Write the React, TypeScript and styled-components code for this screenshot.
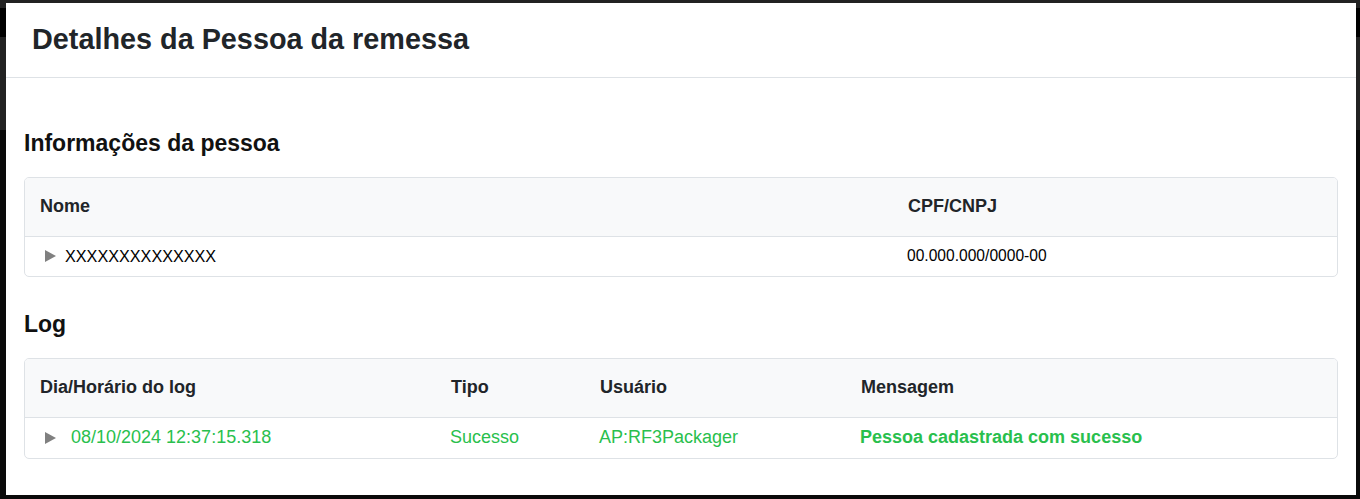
import React from "react";
import styled, { createGlobalStyle } from "styled-components";

const GlobalStyle = createGlobalStyle`
  html, body { margin: 0; padding: 0; }
  body {
    min-height: 499px;
    background: linear-gradient(
      to bottom,
      #222 0px, #222 8px,
      #000 8px, #000 37px,
      #222 37px, #222 130px,
      #0a0a0a 130px, #0a0a0a 100%
    );
    font-family: "Liberation Sans", Arial, Helvetica, sans-serif;
    overflow: hidden;
  }
  * { box-sizing: border-box; }
`;

const Modal = styled.div`
  margin: 3px 4px 0 6px;
  width: 1350px;
  background: #fff;
`;

const ModalHeader = styled.header`
  padding: 20px 26px 20px 26px;
  border-bottom: 1px solid #dee2e6;
`;

const Title = styled.h1`
  margin: 0;
  font-size: 28.8px;
  line-height: 33.6px;
  font-weight: 700;
  color: #212529;
`;

const ModalBody = styled.div`
  padding: 18px 18px 36px;
`;

const Section = styled.section`
  margin-top: 36px;
`;

const SectionTitle = styled.h2`
  margin: 0 0 22px;
  font-size: 23px;
  line-height: 23px;
  font-weight: 700;
  color: #111;
`;

const Table = styled.div<{ $cols: string }>`
  display: grid;
  grid-template-columns: ${(p) => p.$cols};
  border: 1px solid #dee2e6;
  border-radius: 5px;
  overflow: hidden;
`;

const HeadCell = styled.div`
  height: 59px;
  display: flex;
  align-items: center;
  padding: 0 14px 0 15px;
  background: #f8f9fa;
  border-bottom: 1px solid #dee2e6;
  font-size: 18px;
  font-weight: 700;
  color: #212529;
`;

const Cell = styled.div<{
  $h: number;
  $size: number;
  $tone?: "plain" | "success";
  $bold?: boolean;
  $gap?: number;
}>`
  height: ${(p) => p.$h}px;
  display: flex;
  align-items: center;
  gap: ${(p) => p.$gap ?? 0}px;
  padding: 0 14px;
  font-size: ${(p) => p.$size}px;
  font-weight: ${(p) => (p.$bold ? 700 : 400)};
  color: ${(p) => (p.$tone === "success" ? "#29bf4d" : "#000")};
  white-space: nowrap;
`;

const Toggle = styled.svg`
  flex: none;
  margin-left: 6px;
  width: 11px;
  height: 12px;
  fill: #808080;
`;

const Caret = () => (
  <Toggle viewBox="0 0 11 12" aria-hidden="true">
    <polygon points="0,0 11,6 0,12" />
  </Toggle>
);

export default function App() {
  return (
    <>
      <GlobalStyle />
      <Modal>
        <ModalHeader>
          <Title>Detalhes da Pessoa da remessa</Title>
        </ModalHeader>
        <ModalBody>
          <Section>
            <SectionTitle>Informações da pessoa</SectionTitle>
            <Table $cols="868px 1fr">
              <HeadCell>Nome</HeadCell>
              <HeadCell>CPF/CNPJ</HeadCell>
              <Cell $h={39} $size={16.2} $gap={9}>
                <Caret />
                XXXXXXXXXXXXXX
              </Cell>
              <Cell $h={39} $size={15.6}>00.000.000/0000-00</Cell>
            </Table>
          </Section>
          <Section>
            <SectionTitle>Log</SectionTitle>
            <Table $cols="411px 149px 261px 1fr">
              <HeadCell>Dia/Horário do log</HeadCell>
              <HeadCell>Tipo</HeadCell>
              <HeadCell>Usuário</HeadCell>
              <HeadCell>Mensagem</HeadCell>
              <Cell $h={40} $size={18} $tone="success" $gap={15}>
                <Caret />
                08/10/2024 12:37:15.318
              </Cell>
              <Cell $h={40} $size={18} $tone="success">Sucesso</Cell>
              <Cell $h={40} $size={18} $tone="success">AP:RF3Packager</Cell>
              <Cell $h={40} $size={18} $tone="success" $bold>
                Pessoa cadastrada com sucesso
              </Cell>
            </Table>
          </Section>
        </ModalBody>
      </Modal>
    </>
  );
}
